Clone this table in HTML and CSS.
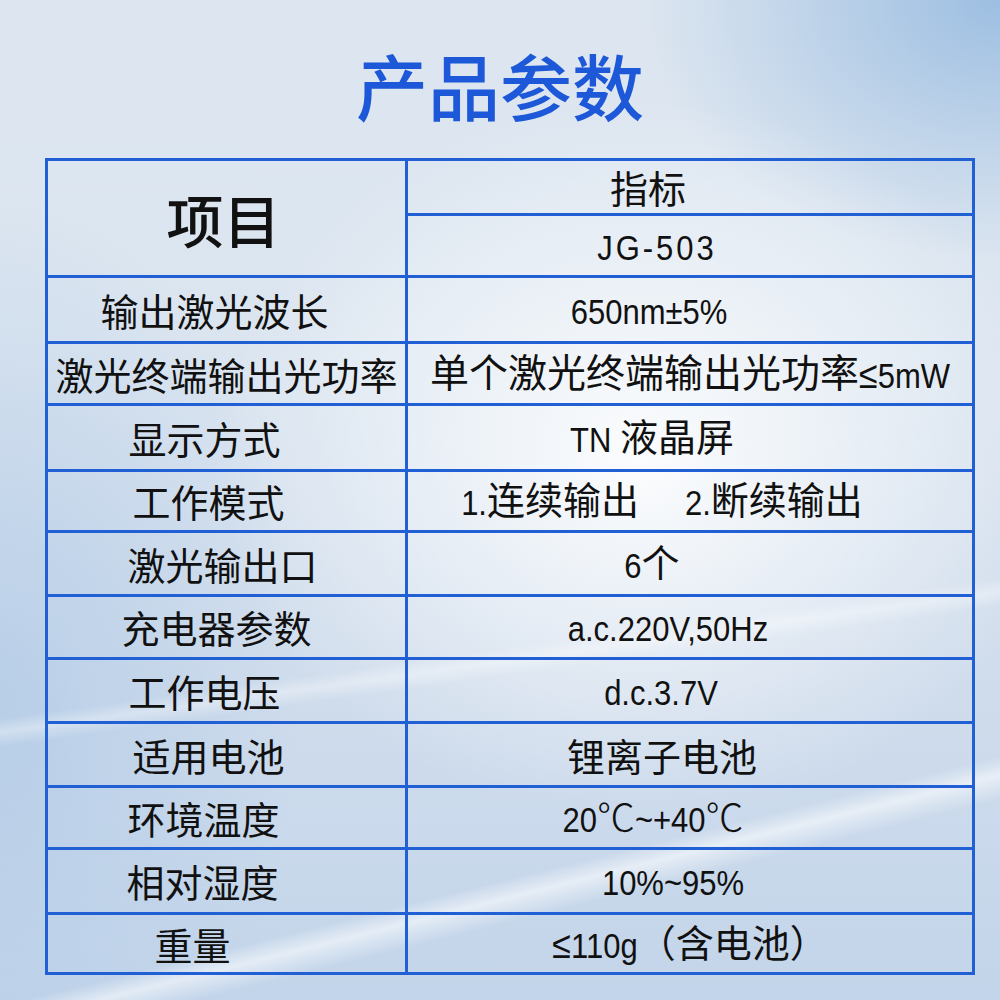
FILE: index.html
```html
<!DOCTYPE html>
<html lang="zh-CN">
<head>
<meta charset="utf-8">
<title>产品参数</title>
<link rel="stylesheet" href="styles.css">
</head>
<body>
<div class="page">
  <h1 class="title">产品参数</h1>
  <table class="spec">
    <colgroup><col class="col-name"><col class="col-value"></colgroup>
    <tbody>
      <tr class="h55">
        <td class="name head" rowspan="2">项目</td>
        <td class="value pr-84">指标</td>
      </tr>
      <tr class="h62">
        <td class="value pr-66"><span class="en model">JG-503</span></td>
      </tr>
      <tr class="h66">
        <td class="name pr-24">输出激光波长</td>
        <td class="value pr-82"><span class="en">650nm±5%</span></td>
      </tr>
      <tr class="h62">
        <td class="name">激光终端输出光功率</td>
        <td class="value long">单个激光终端输出光功率<span class="en le">≤</span><span class="en">5mW</span></td>
      </tr>
      <tr class="h66">
        <td class="name pr-44">显示方式</td>
        <td class="value pr-76"><span class="en">TN&nbsp;</span>液晶屏</td>
      </tr>
      <tr class="h61">
        <td class="name pr-36">工作模式</td>
        <td class="value pr-56"><span class="en">1.</span>连续输出<span class="en gap">2.</span>断续输出</td>
      </tr>
      <tr class="h64">
        <td class="name pr-8">激光输出口</td>
        <td class="value pr-76"><span class="en">6</span>个</td>
      </tr>
      <tr class="h63">
        <td class="name pr-20">充电器参数</td>
        <td class="value pr-44"><span class="en">a.c.220V,50Hz</span></td>
      </tr>
      <tr class="h64">
        <td class="name pr-44">工作电压</td>
        <td class="value pr-58"><span class="en">d.c.3.7V</span></td>
      </tr>
      <tr class="h64">
        <td class="name pr-36">适用电池</td>
        <td class="value pr-56">锂离子电池</td>
      </tr>
      <tr class="h62">
        <td class="name pr-46">环境温度</td>
        <td class="value pr-74"><span class="en">20</span><span class="deg">℃</span><span class="en">~+40</span><span class="deg">℃</span></td>
      </tr>
      <tr class="h65">
        <td class="name pr-48">相对湿度</td>
        <td class="value pr-34"><span class="en">10%~95%</span></td>
      </tr>
      <tr class="h60">
        <td class="name pr-68">重量</td>
        <td class="value"><span class="en le">≤</span><span class="en">110g</span>（含电池）</td>
      </tr>
    </tbody>
  </table>
</div>
</body>
</html>
```

FILE: styles.css
```css
html, body {
  margin: 0;
  padding: 0;
}

.page {
  width: 1000px;
  height: 1000px;
  overflow: hidden;
  box-sizing: border-box;
  padding-top: 48px;
  font-family: "Noto Sans CJK SC", "Noto Sans", sans-serif;
  color: #111;
  background:
    linear-gradient(166deg, transparent 80.5%, rgba(255,255,255,0.55) 82%, transparent 84%),
    linear-gradient(172deg, transparent 63%, rgba(255,255,255,0.35) 64.2%, transparent 65.5%),
    radial-gradient(ellipse 420px 360px at 640px 460px, rgba(255,255,255,0.9) 0%, rgba(255,255,255,0) 100%),
    radial-gradient(ellipse 360px 260px at 1000px 0px, rgba(150,186,224,0.9) 0%, rgba(150,186,224,0) 100%),
    radial-gradient(ellipse 300px 500px at 0px 700px, rgba(175,201,230,0.7) 0%, rgba(175,201,230,0) 100%),
    linear-gradient(180deg, #dde6f0 0%, #dbe5f0 35%, #cfdcec 70%, #c3d5ea 100%);
}

.title {
  margin: 0 0 38px 0;
  height: 72px;
  font-size: 72px;
  line-height: 72px;
  font-weight: 500;
  color: #1d58d9;
  text-align: center;
  letter-spacing: 0;
}

.spec {
  margin-left: 45px;
  width: 930px;
  border-collapse: collapse;
  border: 3px solid #2160d4;
  table-layout: fixed;
}

.col-name { width: 360px; }

.spec td {
  border: 3px solid #2160d4;
  padding: 0;
  text-align: center;
  vertical-align: middle;
  font-size: 38px;
  line-height: 40px;
  font-weight: 400;
  white-space: nowrap;
}

.spec td.head {
  font-size: 57px;
  line-height: 60px;
  font-weight: 500;
  padding-right: 6px;
}

.spec td.long {
  font-size: 39px;
}

.en {
  display: inline-block;
  font-family: "Liberation Sans", Arial, sans-serif;
  font-size: 31px;
  font-weight: 400;
  transform: scaleY(1.12);
}

.le {
  font-size: 34px;
}

.deg {
  font-weight: 300;
}

.model { letter-spacing: 3px; }

.gap { margin-left: 46px; }

.h55 { height: 55px; }
.h60 { height: 60px; }
.h61 { height: 61px; }
.h62 { height: 62px; }
.h63 { height: 63px; }
.h64 { height: 64px; }
.h65 { height: 65px; }
.h66 { height: 66px; }

.spec td.pr-8 { padding-right: 8px; }
.spec td.pr-20 { padding-right: 20px; }
.spec td.pr-24 { padding-right: 24px; }
.spec td.pr-34 { padding-right: 34px; }
.spec td.pr-36 { padding-right: 36px; }
.spec td.pr-44 { padding-right: 44px; }
.spec td.pr-46 { padding-right: 46px; }
.spec td.pr-48 { padding-right: 48px; }
.spec td.pr-56 { padding-right: 56px; }
.spec td.pr-58 { padding-right: 58px; }
.spec td.pr-66 { padding-right: 66px; }
.spec td.pr-68 { padding-right: 68px; }
.spec td.pr-74 { padding-right: 74px; }
.spec td.pr-76 { padding-right: 76px; }
.spec td.pr-82 { padding-right: 82px; }
.spec td.pr-84 { padding-right: 84px; }
```
